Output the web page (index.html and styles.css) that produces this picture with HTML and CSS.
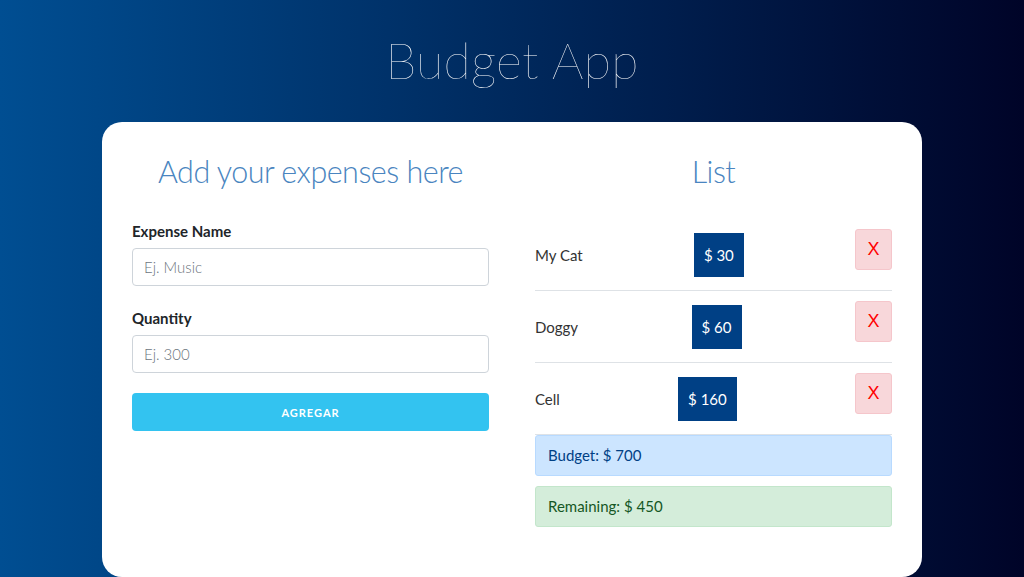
FILE: index.html
```html
<!DOCTYPE html>
<html lang="en">
<head>
<meta charset="utf-8">
<title>Budget App</title>
<link rel="stylesheet" href="styles.css">
</head>
<body>
<header class="header">
  <h1 class="app-title">Budget App</h1>
</header>
<main class="card">
  <section class="col">
    <h2 class="col-title">Add your expenses here</h2>
    <form class="form">
      <div class="field">
        <label class="label">Expense Name</label>
        <input class="input" type="text" placeholder="Ej. Music">
      </div>
      <div class="field">
        <label class="label">Quantity</label>
        <input class="input" type="text" placeholder="Ej. 300">
      </div>
      <button type="button" class="btn-add">AGREGAR</button>
    </form>
  </section>
  <section class="col">
    <h2 class="col-title">List</h2>
    <ul class="list">
      <li class="item"><span class="item-name">My Cat</span><span class="badge">$ 30</span><button type="button" class="btn-del">X</button></li>
      <li class="item"><span class="item-name">Doggy</span><span class="badge">$ 60</span><button type="button" class="btn-del">X</button></li>
      <li class="item"><span class="item-name">Cell</span><span class="badge">$ 160</span><button type="button" class="btn-del">X</button></li>
    </ul>
    <div class="alert alert-budget">Budget: $ 700</div>
    <div class="alert alert-remaining">Remaining: $ 450</div>
  </section>
</main>
</body>
</html>
```

FILE: styles.css
```css
* { box-sizing: border-box; }
html, body { height: 100%; }
body {
  margin: 0;
  overflow: hidden;
  font-family: "Lato", "Open Sans", sans-serif;
  color: #212529;
  background: linear-gradient(to right, #004e92, #000428);
}
.header {
  padding-top: 28px;
  height: 122px;
}
.app-title {
  margin: 0;
  text-align: center;
  color: #fff;
  font-weight: 100;
  font-size: 50px;
  line-height: 64px;
  letter-spacing: 0.3px;
}
.card {
  width: 820px;
  height: 455px;
  margin: 0 auto;
  background: #fff;
  border-radius: 20px;
  padding: 29px 30px 0;
  display: grid;
  grid-template-columns: 357px 357px;
  column-gap: 46px;
  align-items: start;
}
.col-title {
  margin: 0;
  text-align: center;
  color: #4a85c0;
  font-weight: 300;
  font-size: 30.5px;
  line-height: 40px;
  letter-spacing: -0.5px;
}
.form { margin-top: 29px; }
.field { margin-bottom: 21px; }
.field:last-of-type { margin-bottom: 20px; }
.label {
  display: block;
  font-weight: 700;
  font-size: 15px;
  line-height: 22px;
  margin-bottom: 6px;
  color: #212529;
}
.input {
  display: block;
  width: 100%;
  height: 38px;
  padding: 0 11px;
  border: 1px solid #ced4da;
  border-radius: 4px;
  font-family: inherit;
  font-size: 15px;
  color: #495057;
}
.input::placeholder { color: #6c757d; font-weight: 300; }
.btn-add {
  display: block;
  width: 100%;
  height: 38px;
  border: none;
  border-radius: 4px;
  background: #33c3f0;
  color: #fff;
  font-family: inherit;
  font-size: 11px;
  font-weight: 700;
  letter-spacing: 1px;
}
.list {
  list-style: none;
  margin: 28px 0 0;
  padding: 0;
}
.item {
  display: flex;
  justify-content: space-between;
  align-items: center;
  height: 72px;
  padding: 10px 0 9px;
  border-bottom: 1px solid #dee2e6;
}
.item-name {
  font-size: 15px;
  color: #333;
}
.badge {
  background: #004085;
  color: #fff;
  font-size: 15px;
  line-height: 20px;
  padding: 12px 10px;
}
.btn-del {
  width: 37px;
  height: 41px;
  margin-bottom: 11px;
  padding: 0;
  background: #f8d7da;
  border: 1px solid #f5c6cb;
  border-radius: 3px;
  color: #ff0000;
  font-family: "Liberation Sans", sans-serif;
  font-size: 18px;
}
.alert {
  padding: 8px 12px;
  border: 1px solid transparent;
  border-radius: 3px;
  font-size: 15px;
  line-height: 23px;
}
.alert-budget {
  background: #cce5ff;
  border-color: #b8daff;
  color: #004085;
  margin-bottom: 10px;
}
.alert-remaining {
  background: #d4edda;
  border-color: #c3e6cb;
  color: #155724;
}
```
